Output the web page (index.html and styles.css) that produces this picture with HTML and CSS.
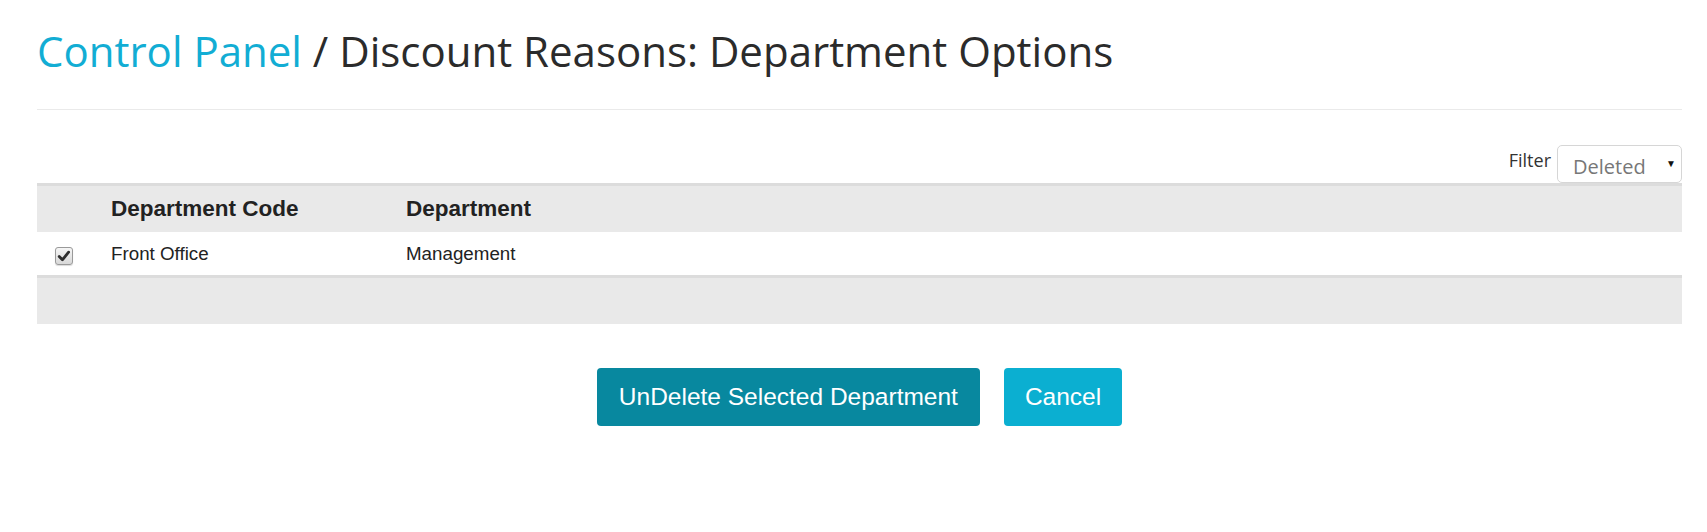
FILE: index.html
```html
<!DOCTYPE html>
<html lang="en">
<head>
<meta charset="utf-8">
<title>Discount Reasons: Department Options</title>
<link rel="stylesheet" href="styles.css">
</head>
<body>
<div class="page">
  <h1 class="title"><a class="title-link" href="#">Control Panel</a> / Discount Reasons: Department Options</h1>
  <hr class="sep">
  <div class="filter-row">
    <label class="filter-label" for="filter">Filter</label>
    <div class="select-wrap">
      <select id="filter" class="filter-select">
        <option>Deleted</option>
      </select>
      <span class="select-arrow">&#9660;</span>
    </div>
  </div>
  <table class="grid">
    <colgroup>
      <col class="col-check">
      <col class="col-code">
      <col>
    </colgroup>
    <thead>
      <tr>
        <th></th>
        <th>Department Code</th>
        <th>Department</th>
      </tr>
    </thead>
    <tbody>
      <tr>
        <td class="check-cell">
          <span class="checkbox">
            <svg width="14" height="14" viewBox="0 0 14 14"><path d="M2.2 7.6 L5.4 10.8 L11.6 3.2" fill="none" stroke="#2f2f2f" stroke-width="2.8" stroke-linecap="round" stroke-linejoin="round"/></svg>
          </span>
        </td>
        <td>Front Office</td>
        <td>Management</td>
      </tr>
    </tbody>
    <tfoot>
      <tr><td colspan="3"></td></tr>
    </tfoot>
  </table>
  <div class="actions">
    <button class="btn btn-primary" type="button">UnDelete Selected Department</button>
    <button class="btn btn-info" type="button">Cancel</button>
  </div>
</div>
</body>
</html>
```

FILE: styles.css
```css
html, body {
  margin: 0;
  padding: 0;
  background: #ffffff;
}

.page {
  padding: 26px 25px 0 37px;
  font-family: "Open Sans", "Liberation Sans", sans-serif;
  color: #2b2b2b;
}

.title {
  margin: 0;
  font-family: "Open Sans", sans-serif;
  font-weight: 400;
  font-size: 42px;
  line-height: 50px;
  color: #2b2b2b;
}

.title-link {
  color: #12add4;
  text-decoration: none;
}

.sep {
  margin: 33px 0 0 0;
  border: 0;
  border-top: 1px solid #eaeaea;
  height: 0;
}

.filter-row {
  display: flex;
  justify-content: flex-end;
  align-items: flex-start;
  gap: 6px;
  margin-top: 35px;
}

.filter-label {
  font-family: "Open Sans", sans-serif;
  font-size: 18px;
  line-height: 25px;
  margin-top: 3px;
  color: #333333;
}

.select-wrap {
  position: relative;
  width: 125px;
  height: 38px;
}

.filter-select {
  -webkit-appearance: none;
  appearance: none;
  box-sizing: border-box;
  width: 125px;
  height: 38px;
  margin: 0;
  padding: 5px 24px 0 15px;
  border: 1px solid #d6d6d6;
  border-radius: 5px;
  background: #ffffff;
  font-family: "Open Sans", sans-serif;
  font-size: 20px;
  color: #777777;
  outline: none;
}

.select-arrow {
  position: absolute;
  right: 6px;
  top: 13px;
  font-size: 10px;
  line-height: 10px;
  color: #111111;
  pointer-events: none;
}

.grid {
  width: 100%;
  border-collapse: collapse;
  font-family: "Liberation Sans", Arial, sans-serif;
  color: #222222;
}

.col-check { width: 74px; }
.col-code { width: 295px; }

.grid thead tr {
  background: #e9e9e9;
  border-top: 3px solid #dcdcdc;
}

.grid th {
  height: 45px;
  padding: 0 0 1px 0;
  text-align: left;
  font-weight: 700;
  font-size: 22.5px;
  vertical-align: middle;
}

.grid tbody td {
  height: 43px;
  padding: 0;
  font-size: 18.75px;
  vertical-align: middle;
}

.checkbox {
  display: flex;
  align-items: center;
  justify-content: center;
  box-sizing: border-box;
  width: 18px;
  height: 18px;
  margin-left: 18px;
  margin-top: 4px;
  border: 1px solid #9a9a9a;
  border-radius: 3px;
  background: linear-gradient(#f6f6f6, #d8d8d8);
  box-shadow: 0 1px 1px rgba(0,0,0,0.15);
}

.check-cell {
  padding-left: 0;
}

.grid tfoot tr {
  background: #e9e9e9;
  border-top: 3px solid #dcdcdc;
}

.grid tfoot td {
  height: 46px;
  padding: 0;
}

.actions {
  display: flex;
  justify-content: center;
  gap: 24px;
  margin-top: 44px;
}

.btn {
  height: 58px;
  border: 0;
  border-radius: 4px;
  font-family: "Liberation Sans", Arial, sans-serif;
  font-size: 24.5px;
  color: #ffffff;
  cursor: pointer;
}

.btn-primary {
  padding: 0 22px;
  background: #08889f;
}

.btn-info {
  padding: 0 21px;
  background: #0bafd1;
}
```
